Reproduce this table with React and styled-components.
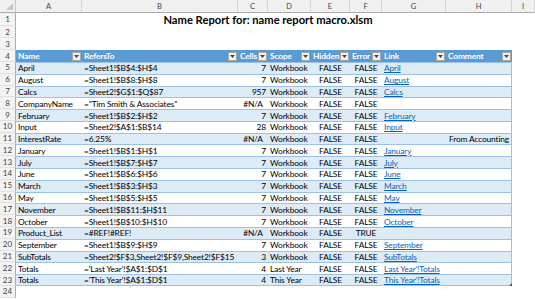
import React from 'react'
import styled, { createGlobalStyle } from 'styled-components'

const GlobalStyle = createGlobalStyle`
    html, body {
        margin: 0;
        padding: 0;
        background: #ffffff;
    }
    body {
        font-family: Lato, 'Liberation Sans', sans-serif;
        overflow: hidden;
    }
`

const COLUMNS = '16px 66px 156px 30px 43px 39px 32px 64px 66px 1fr'
const LETTERS = ['A', 'B', 'C', 'D', 'E', 'F', 'G', 'H', 'I']
const HEADERS = ['Name', 'RefersTo', 'Cells', 'Scope', 'Hidden', 'Error', 'Link', 'Comment']

const W = 'Workbook'
const F = 'FALSE'

const rows = [
    ['April', '=Sheet1!$B$4:$H$4', '7', W, F, F, 'April', ''],
    ['August', '=Sheet1!$B$8:$H$8', '7', W, F, F, 'August', ''],
    ['Calcs', '=Sheet2!$G$1:$Q$87', '957', W, F, F, 'Calcs', ''],
    ['CompanyName', '="Tim Smith & Associates"', '#N/A', W, F, F, '', ''],
    ['February', '=Sheet1!$B$2:$H$2', '7', W, F, F, 'February', ''],
    ['Input', '=Sheet2!$A$1:$B$14', '28', W, F, F, 'Input', ''],
    ['InterestRate', '=6.25%', '#N/A', W, F, F, '', 'From Accounting'],
    ['January', '=Sheet1!$B$1:$H$1', '7', W, F, F, 'January', ''],
    ['July', '=Sheet1!$B$7:$H$7', '7', W, F, F, 'July', ''],
    ['June', '=Sheet1!$B$6:$H$6', '7', W, F, F, 'June', ''],
    ['March', '=Sheet1!$B$3:$H$3', '7', W, F, F, 'March', ''],
    ['May', '=Sheet1!$B$5:$H$5', '7', W, F, F, 'May', ''],
    ['November', '=Sheet1!$B$11:$H$11', '7', W, F, F, 'November', ''],
    ['October', '=Sheet1!$B$10:$H$10', '7', W, F, F, 'October', ''],
    ['Product_List', '=#REF!#REF!', '#N/A', W, F, 'TRUE', '', ''],
    ['September', '=Sheet1!$B$9:$H$9', '7', W, F, F, 'September', ''],
    ['SubTotals', '=Sheet2!$F$3,Sheet2!$F$9,Sheet2!$F$15', '3', W, F, F, 'SubTotals', ''],
    ['Totals', "='Last Year'!$A$1:$D$1", '4', 'Last Year', F, F, "Last Year'!Totals", ''],
    ['Totals', "='This Year'!$A$1:$D$1", '4', 'This Year', F, F, "This Year'!Totals", ''],
]

const alignFor = (value, col) => {
    if (col === 2) return value.startsWith('#') ? 'center' : 'right'
    if (col === 4 || col === 5) return 'center'
    if (col === 7) return 'right'
    return 'left'
}

const DropArrow = () => (
    <DropButton>
        <svg width="5" height="3" viewBox="0 0 5 3">
            <path d="M0 0 L5 0 L2.5 3 Z" fill="#444" />
        </svg>
    </DropButton>
)

const App = () => {
    return (
        <Sheet>
            <GlobalStyle />
            <Row $h={13}>
                <Corner>
                    <svg width="7" height="7" viewBox="0 0 7 7">
                        <path d="M7 0 L7 7 L0 7 Z" fill="#c6c6c6" />
                    </svg>
                </Corner>
                {LETTERS.map((l) => (
                    <ColHead key={l}>{l}</ColHead>
                ))}
            </Row>

            <Row $h={13}>
                <RowHead>1</RowHead>
                <Title>Name Report for: name report macro.xlsm</Title>
            </Row>
            <Row $h={12}>
                <RowHead>2</RowHead>
            </Row>
            <Row $h={12}>
                <RowHead>3</RowHead>
            </Row>

            <Row $h={12}>
                <RowHead>4</RowHead>
                {HEADERS.map((h) => (
                    <HeadCell key={h}>
                        <span>{h}</span>
                        <DropArrow />
                    </HeadCell>
                ))}
            </Row>

            {rows.map((r, i) => (
                <Row key={i} $h={11.79}>
                    <RowHead>{i + 5}</RowHead>
                    {r.map((v, c) => (
                        <Cell
                            key={c}
                            $band={i % 2 === 0}
                            $align={alignFor(v, c)}
                            $last={c === 7}
                            $bottom={i === rows.length - 1}
                        >
                            {c === 6 && v ? <Link>{v}</Link> : v}
                            {c === 7 && i === rows.length - 1 && <Handle />}
                        </Cell>
                    ))}
                </Row>
            ))}

            <Row $h={12}>
                <RowHead>24</RowHead>
            </Row>
        </Sheet>
    )
}

export default App

const Sheet = styled.div`
    width: 535px;
    height: 299px;
    overflow: hidden;
    background: #ffffff;
`

const Row = styled.div`
    display: grid;
    grid-template-columns: ${COLUMNS};
    height: ${(p) => p.$h}px;
    font-size: 8.4px;
    letter-spacing: -0.15px;
    color: #000000;
`

const Corner = styled.div`
    display: flex;
    align-items: flex-end;
    justify-content: flex-end;
    padding: 0 2px 2px 0;
    background: #f0f0f0;
    border-right: 1px solid #c6c6c6;
    border-bottom: 1px solid #ababab;
`

const ColHead = styled.div`
    display: flex;
    align-items: center;
    justify-content: center;
    font-size: 7.5px;
    letter-spacing: 0;
    color: #444444;
    background: #f0f0f0;
    border-right: 1px solid #d4d4d4;
    border-bottom: 1px solid #ababab;
`

const RowHead = styled.div`
    display: flex;
    align-items: center;
    justify-content: center;
    font-size: 8px;
    letter-spacing: 0;
    color: #444444;
    background: #f3f3f3;
    border-right: 1px solid #ababab;
    border-bottom: 1px solid #e1e1e1;
    box-sizing: border-box;
`

const Title = styled.div`
    grid-column: 2 / 10;
    display: flex;
    align-items: center;
    justify-content: center;
    font-weight: 700;
    font-size: 11.2px;
    letter-spacing: 0;
    padding-left: 8px;
`

const HeadCell = styled.div`
    display: flex;
    align-items: center;
    justify-content: space-between;
    padding: 0 1px 0 2px;
    background: #5b9bd5;
    color: #ffffff;
    font-weight: 700;
    overflow: hidden;
    white-space: nowrap;
`

const DropButton = styled.div`
    flex: none;
    width: 9px;
    height: 9px;
    box-sizing: border-box;
    display: flex;
    align-items: center;
    justify-content: center;
    background: #f2f2f2;
    border: 1px solid #a6a6a6;
`

const Cell = styled.div`
    position: relative;
    display: flex;
    align-items: center;
    justify-content: ${(p) =>
        p.$align === 'right' ? 'flex-end' : p.$align === 'center' ? 'center' : 'flex-start'};
    padding: 0 2px;
    background: ${(p) => (p.$band ? '#ddebf7' : '#ffffff')};
    border-top: 1px solid #9bc2e6;
    border-bottom: ${(p) => (p.$bottom ? '1px solid #9bc2e6' : 'none')};
    border-right: ${(p) => (p.$last ? '1px solid #9bc2e6' : 'none')};
    box-sizing: border-box;
    white-space: nowrap;
`

const Link = styled.span`
    color: #0563c1;
    text-decoration: underline;
`

const Handle = styled.span`
    position: absolute;
    right: -1px;
    bottom: -1px;
    width: 0;
    height: 0;
    border-left: 3px solid transparent;
    border-bottom: 3px solid #2f5597;
`
